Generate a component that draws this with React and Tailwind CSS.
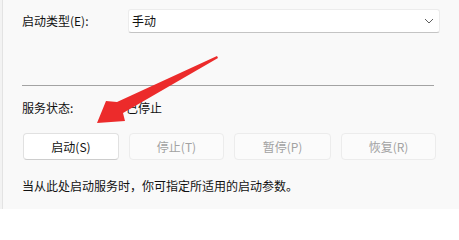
export default function App() {
  const font = { fontFamily: '"Noto Sans CJK SC", "Noto Sans", sans-serif' };

  return (
    <div className="relative w-[459px] h-[209px] bg-[#f3f3f3] pl-[2px] overflow-hidden" style={font}>
      <div className="h-full bg-[#f9f9f9] border-l border-[#e3e3e3] pl-[19px] pt-[9px] text-[12px] leading-[16px] text-[#111]">
        {/* startup type */}
        <div className="flex items-center h-[24px]">
          <div className="w-[106px]">启动类型(E):</div>
          <div className="w-[312px] h-[24px] flex items-center justify-between bg-white border border-[#ececec] border-b-[#c4c4c4] rounded-[3px] pl-[3px] pr-[5px]">
            <span>手动</span>
            <svg width="10" height="6" viewBox="0 0 10 6" fill="none">
              <path d="M1 1 L5 5 L9 1" stroke="#5f5f5f" strokeWidth="1" />
            </svg>
          </div>
        </div>

        <div className="mt-[52px] w-[412px] h-px bg-[#a3a3a3]" />

        {/* status */}
        <div className="flex mt-[14px] h-[16px] items-center">
          <div className="w-[104px]">服务状态:</div>
          <div>已停止</div>
        </div>

        {/* buttons */}
        <div className="flex gap-[10px] mt-[17px] pl-px">
          <button className="w-[96px] h-[27px] bg-white border border-[#e1e1e1] border-b-[#cdcdcd] rounded-[4px] text-[#111]">
            启动(S)
          </button>
          <button className="w-[95px] h-[27px] bg-[#fbfbfb] border border-[#ececec] rounded-[4px] text-[#a2a2a2]">
            停止(T)
          </button>
          <button className="w-[97px] h-[27px] bg-[#fbfbfb] border border-[#ececec] rounded-[4px] text-[#a2a2a2]">
            暂停(P)
          </button>
          <button className="w-[95px] h-[27px] bg-[#fbfbfb] border border-[#ececec] rounded-[4px] text-[#a2a2a2]">
            恢复(R)
          </button>
        </div>

        <div className="mt-[18px]">当从此处启动服务时，你可指定所适用的启动参数。</div>
      </div>

      {/* red annotation arrow */}
      <svg className="absolute left-0 top-0" width="459" height="209" viewBox="0 0 459 209">
        <polygon
          points="217,56 117,102 106,101 97,123 125,121 123,113 218,58"
          fill="#ec2b2b"
        />
      </svg>
    </div>
  );
}
